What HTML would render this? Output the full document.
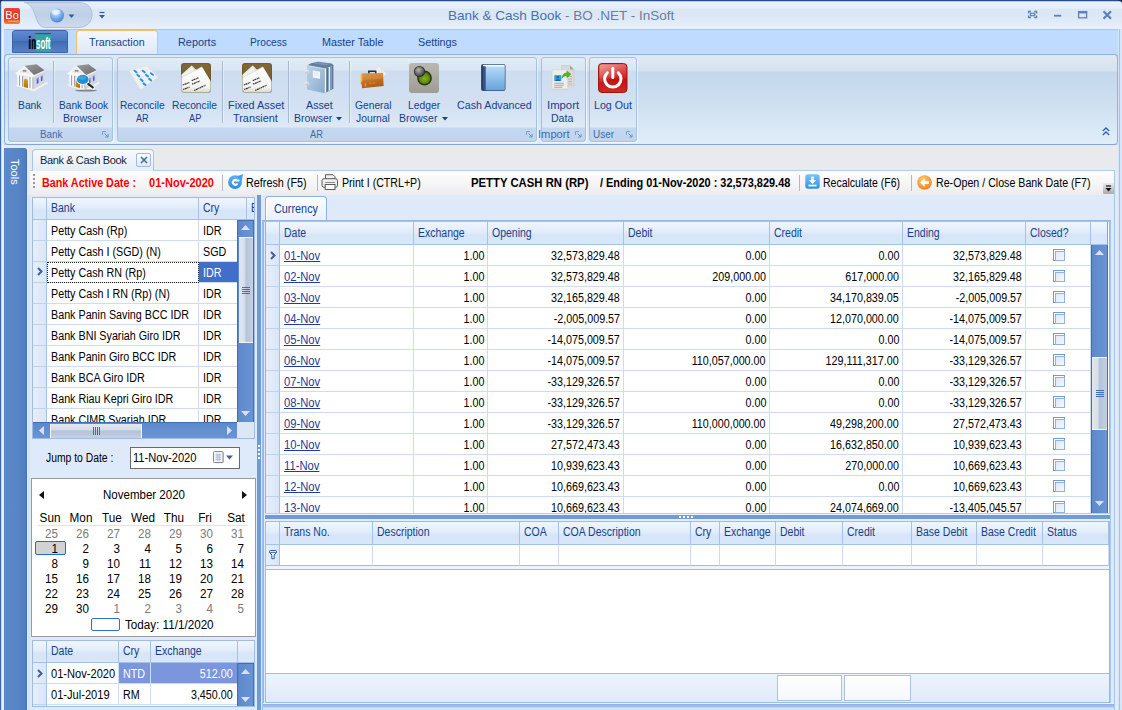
<!DOCTYPE html>
<html><head><meta charset="utf-8"><title>Bank &amp; Cash Book</title>
<style>

*{box-sizing:border-box;margin:0;padding:0}
html,body{width:1122px;height:710px;overflow:hidden;background:#bfdbff}
body{font-family:"Liberation Sans",sans-serif;font-size:11px;color:#000}
#app{position:absolute;left:0;top:0;width:1122px;height:710px;overflow:hidden;background:#bfdbff}
.abs{position:absolute}
.t{position:absolute;white-space:nowrap;line-height:14px}
/* title bar */
#titlebar{position:absolute;left:0;top:0;width:1122px;height:29px;background:linear-gradient(#eaf1fb 0,#e6eefa 8px,#dce7f6 9.500px,#dde8f6 17px,#e8f0fb 29px)}
#frameL{position:absolute;left:0;top:0;width:4px;height:710px;background:linear-gradient(90deg,#3a65ab 0,#3a65ab 1px,#bcd3f2 1.200px,#e6effb 2.500px,#e1ebfa 4px)}
#frameR{position:absolute;left:1118px;top:29px;width:4px;height:681px;background:linear-gradient(90deg,#d6e4f8 0,#d6e4f8 1px,#a4c3ee 1px,#a4c3ee 2px,#dbe8fa 2px,#d3e3f9 4px)}
#frameR2{display:none}
#frameT{position:absolute;left:0;top:0;width:1122px;height:2px;background:linear-gradient(#2a4c88 0,#2a4c88 1px,#9fbfe9 1px,#c5d9f3 2px)}
#title{left:448px;top:7px;font-size:13.5px;line-height:18px;color:#3e6aaa}
#tabrow{position:absolute;left:4px;top:29px;width:1114px;height:25px;background:#bfdbff;border-top:1px solid #a6c6ee}
.rtab{position:absolute;top:35px;font-size:11.6px;line-height:14px;color:#15428b;white-space:nowrap;letter-spacing:-.1px}
#tabsel{position:absolute;left:76px;top:30px;width:82px;height:25px;border:1px solid #f0c36b;border-bottom:none;border-radius:4px 4px 0 0;background:linear-gradient(#f4f8fd,#e6eef9 60%,#dde8f6)}
#insoft{position:absolute;left:12px;top:30px;width:56px;height:23px;border-radius:3px 3px 0 0;background:linear-gradient(#5f8bcf 0,#4a78bf 45%,#3f6cb3 50%,#5582c6 100%);border:1px solid #3c66a8}
/* ribbon */
#ribbon{position:absolute;left:4px;top:54px;width:1114px;height:91px;border:1px solid #8db2e3;border-bottom-color:#7ea6da;border-radius:4px;background:linear-gradient(#e3e9f3 0,#d5e1ef 16px,#c4d7ec 17px,#cfe0f1 50px,#dcebf7 80px,#dfeef9 100%)}
.rgroup{position:absolute;top:57px;height:85px;border:1px solid #a3c0e6;border-radius:3px;background:linear-gradient(#e3ecf7 0,#dae6f4 12px,#cddcef 13px,#d3e1f2 50px,#dfe9f6 69px,#c3d8ef 70px,#c1d6ee 100%);box-shadow:1px 1px 0 rgba(255,255,255,.6)}
.rcap{position:absolute;top:127px;font-size:11px;line-height:14px;color:#3e6aaa;white-space:nowrap;text-align:center;letter-spacing:-.25px}
.rlbl{position:absolute;font-size:11px;line-height:13px;color:#15428b;white-space:nowrap;text-align:center;letter-spacing:-.25px}
.rsep{position:absolute;top:61px;width:1px;height:62px;background:#a5b9d8;box-shadow:1px 0 0 rgba(255,255,255,.4)}
.launch{position:absolute;top:131px;width:7px;height:7px}

/* document area */
#docbg{position:absolute;left:4px;top:145px;width:1114px;height:565px;background:#e9eaee}
#tools{position:absolute;left:4px;top:148px;width:23px;height:562px;background:linear-gradient(90deg,#5c88c7,#5785c6 60%,#4f7dc0);border-radius:0 3px 0 0;border-right:1px solid #4672b4}
#toolsT{position:absolute;left:8px;top:159px;width:14px;height:40px;color:#fff;font-size:11px;writing-mode:vertical-rl;line-height:14px;letter-spacing:0}
#doctab{position:absolute;left:32px;top:149px;width:122px;height:22px;border:1px solid #a9c5ea;border-bottom:none;border-radius:4px 4px 0 0;background:linear-gradient(#f7fafe,#e3edfb)}
#doctabT{left:40px;top:153px;font-size:11px;letter-spacing:-.38px;color:#141d36}
#docx{position:absolute;left:136px;top:153px;width:15px;height:14px;border:1px solid #9dbbe3;border-radius:2px;background:linear-gradient(#fdfeff,#dde9f8)}
#toolbar{position:absolute;left:30px;top:170px;width:1085px;height:25px;border-right:1px solid #a9c6ec;background:linear-gradient(#fdfdfd 0,#f6f6f7 50%,#ececee 100%);border-top:1px solid #b5cdeb}
.tb{position:absolute;top:176px;white-space:nowrap;font-size:11px;line-height:14px;color:#000}
.tbsep{position:absolute;top:175px;width:1px;height:16px;background:#b8b8b8}
#main{position:absolute;left:28px;top:195px;width:1087px;height:515px;background:#deeafa;border-right:1px solid #a9c6ec}
/* grids */
.grid{position:absolute;overflow:hidden;background:#fff}
.gh{position:absolute;background:linear-gradient(#eef5fe 0,#e2edfb 45%,#d7e5f9 60%,#d9e7fa 100%);border-right:1px solid #a4c1e8;border-bottom:1px solid #a4c1e8;border-top:1px solid #a4c1e8;color:#15428b;font-size:11px;white-space:nowrap;overflow:hidden}
.gh span{position:absolute;left:4px;top:3px;line-height:14px;font-size:12px;transform:scaleX(.875);transform-origin:0 50%}
.gc{position:absolute;border-right:1px solid #cddcf0;border-bottom:1px solid #cddcf0;font-size:11px;white-space:nowrap;overflow:hidden;background:#fff}
.gc span{position:absolute;top:4px;line-height:14px;font-size:12px;transform:scaleX(.895);transform-origin:0 50%}
.gc span.r{transform-origin:100% 50%}
.gi{position:absolute;background:linear-gradient(90deg,#e6effb,#d9e6f8);border-right:1px solid #a4c1e8;border-bottom:1px solid #bcd2ee}
.lnk{color:#223a9a;text-decoration:underline}
.sbv{position:absolute;background:linear-gradient(90deg,#5d89cc,#6a94d3);border-left:1px solid #406db5;border-right:1px solid #406db5}
.sbh{position:absolute;background:linear-gradient(#5d89cc,#6a94d3);border-top:1px solid #406db5;border-bottom:1px solid #406db5}
.thumbv{position:absolute;background:linear-gradient(90deg,#e2e7ef 0,#d6deea 40%,#b4c3d9 50%,#c6d1e1 100%);border-top:1px solid #f2f5fa;border-bottom:1px solid #f2f5fa}
.thumbh{position:absolute;background:linear-gradient(#e2e7ef 0,#d6deea 40%,#b4c3d9 50%,#c6d1e1 100%);border-left:1px solid #f2f5fa;border-right:1px solid #f2f5fa}
.chk{position:absolute;width:12px;height:12px;border:1px solid #6f9bdc;background:#fff}
.chk:after{content:"";position:absolute;left:1px;top:1px;width:8px;height:8px;border:1px solid #8fb2e6;background:linear-gradient(135deg,#dfe8f7,#f4f8fe)}
/* calendar */
#cal{position:absolute;left:31px;top:478px;width:225px;height:159px;background:#fff;border:1px solid #9b9b9b}
.cd{position:absolute;width:30px;text-align:right;font-size:12.5px;line-height:14px;transform:scaleX(.93);transform-origin:100% 50%}
.cw{position:absolute;width:40px;text-align:center;font-size:12.5px;line-height:14px;transform:scaleX(.94);transform-origin:50% 50%}

</style></head>
<body>
<div id="app">
<div id="titlebar"></div>
<div id="tabrow"></div>
<svg class="abs" style="left:0;top:0" width="130" height="30" viewBox="0 0 130 30">
<defs><linearGradient id="qg" x1="0" y1="0" x2="0" y2="1"><stop offset="0" stop-color="#cbd8ec"/><stop offset=".5" stop-color="#bfcfe7"/><stop offset="1" stop-color="#cfdbee"/></linearGradient>
<radialGradient id="orb" cx=".4" cy=".3" r=".8"><stop offset="0" stop-color="#e8f3ff"/><stop offset=".45" stop-color="#7fb2ee"/><stop offset="1" stop-color="#3b78d0"/></radialGradient></defs>
<path d="M24 2.5 H78 C88 2.5 92 8 92 14.5 C92 21 88 27.500 78 27.500 H46 C38 27.500 37 20 34 12 C31 5 28 2.500 24 2.500Z" fill="url(#qg)" stroke="#adc0de" stroke-width="1"/>
<circle cx="57" cy="15.500" r="7" fill="url(#orb)"/>
<ellipse cx="56" cy="12" rx="4.500" ry="2.800" fill="#fff" opacity=".55"/>
<path d="M68.500 14.500h6l-3 3.500z" fill="#2a5db0"/>
<path d="M99.500 12.500h5" stroke="#2a5db0" stroke-width="1.200"/><path d="M99 15h6l-3 3.500z" fill="#2a5db0"/>
</svg>
<svg class="abs" style="left:4px;top:8px" width="16" height="16" viewBox="0 0 16 16">
<defs><linearGradient id="bog" x1="0" y1="0" x2="0" y2="1"><stop offset="0" stop-color="#e8463a"/><stop offset=".6" stop-color="#e1321f"/><stop offset="1" stop-color="#f28a1c"/></linearGradient></defs>
<rect x="0" y="0" width="16" height="16" rx="2" fill="url(#bog)"/>
<text x="1.300" y="11" font-family="Liberation Sans" font-size="11.500" fill="#fff" textLength="13.500" lengthAdjust="spacingAndGlyphs">Bo</text>
<rect x="4" y="12.500" width="11" height="1.200" fill="#f7c9a0" opacity=".7"/>
</svg>
<div class="t" id="title"><span style="color:#4570b4">Bank &amp; Cash Book</span><span style="color:#6b7c9f"> - BO .NET - InSoft</span></div>
<svg class="abs" style="left:1020px;top:6px" width="100" height="18" viewBox="0 0 100 18">
<g fill="none" stroke="#5c80b8" stroke-width="1.300">
<path d="M8.600 7.500v-2h2.400M14.200 5.500h2.400v2M8.600 9.500v2h2.400M14.200 11.500h2.400v-2"/><rect x="10.500" y="7.300" width="4.200" height="2.400" stroke-width="1.200"/>
<path d="M34 9.700h7.200" stroke-width="1.800"/>
<rect x="58.600" y="5.600" width="8" height="6.200"/><path d="M58 6.400h9.200" stroke-width="2"/>
<path d="M83.500 5.300l7.500 7.400M91 5.300l-7.500 7.400" stroke-width="2.200"/>
</g></svg>
<div id="insoft"></div><svg class="abs" style="left:26px;top:31px" width="30" height="22" viewBox="0 0 30 22">
<rect x="9.500" y="2.500" width="15.500" height="18" fill="#38a3a3"/>
<path d="M9.500 2.700h15.500" stroke="#26384a" stroke-width=".8"/>
<rect x="2.800" y="5" width="1.900" height="1.900" fill="#10131a"/><rect x="2.800" y="8.300" width="1.900" height="9.700" fill="#10131a"/>
<path d="M6.500 18V8.300M6.500 10.800C6.800 8.200 9 8.200 9 10.800V18" fill="none" stroke="#10131a" stroke-width="1.700"/>
<text x="10" y="18" font-family="Liberation Sans" font-size="16" font-weight="bold" fill="#fff" textLength="14.500" lengthAdjust="spacingAndGlyphs">soft</text>
</svg>
<div id="tabsel"></div>
<div class="t" style="left:88.7px;top:35px;font-size:11px;font-weight:normal;transform:scaleX(0.9744);transform-origin:0 0;color:#15428b">Transaction</div>
<div class="t" style="left:178.4px;top:35px;font-size:11px;font-weight:normal;transform:scaleX(0.9888);transform-origin:0 0;color:#15428b">Reports</div>
<div class="t" style="left:250.4px;top:35px;font-size:11px;font-weight:normal;transform:scaleX(0.9283);transform-origin:0 0;color:#15428b">Process</div>
<div class="t" style="left:321.7px;top:35px;font-size:11px;font-weight:normal;transform:scaleX(0.9796);transform-origin:0 0;color:#15428b">Master Table</div>
<div class="t" style="left:417.6px;top:35px;font-size:11px;font-weight:normal;transform:scaleX(0.9811);transform-origin:0 0;color:#15428b">Settings</div>
<div id="ribbon"></div>
<div class="rgroup" style="left:8px;width:105px"></div>
<div class="rgroup" style="left:117px;width:420px"></div>
<div class="rgroup" style="left:541px;width:45px"></div>
<div class="rgroup" style="left:589px;width:48px"></div>
<div class="rsep" style="left:53px"></div>
<div class="rsep" style="left:222px"></div>
<div class="rsep" style="left:288px"></div>
<div class="rsep" style="left:349px"></div>
<svg class="launch" style="left:102px" viewBox="0 0 7 7"><path d="M0.5 4V0.5H4" fill="none" stroke="#7b9fd0" stroke-width="1"/><path d="M2.5 2.5L6 6M6 3.2V6H3.2" fill="none" stroke="#6b8fc4" stroke-width="1"/></svg>
<svg class="launch" style="left:526px" viewBox="0 0 7 7"><path d="M0.5 4V0.5H4" fill="none" stroke="#7b9fd0" stroke-width="1"/><path d="M2.5 2.5L6 6M6 3.2V6H3.2" fill="none" stroke="#6b8fc4" stroke-width="1"/></svg>
<svg class="launch" style="left:575px" viewBox="0 0 7 7"><path d="M0.5 4V0.5H4" fill="none" stroke="#7b9fd0" stroke-width="1"/><path d="M2.5 2.5L6 6M6 3.2V6H3.2" fill="none" stroke="#6b8fc4" stroke-width="1"/></svg>
<svg class="launch" style="left:626px" viewBox="0 0 7 7"><path d="M0.5 4V0.5H4" fill="none" stroke="#7b9fd0" stroke-width="1"/><path d="M2.5 2.5L6 6M6 3.2V6H3.2" fill="none" stroke="#6b8fc4" stroke-width="1"/></svg>
<div class="t" style="left:18.3px;top:99px;font-size:11px;font-weight:normal;transform:scaleX(0.9371);transform-origin:0 0;color:#15428b;line-height:13px">Bank</div>
<div class="t" style="left:58.5px;top:99px;font-size:11px;font-weight:normal;transform:scaleX(0.9248);transform-origin:0 0;color:#15428b;line-height:13px">Bank Book</div>
<div class="t" style="left:120.3px;top:99px;font-size:11px;font-weight:normal;transform:scaleX(0.9232);transform-origin:0 0;color:#15428b;line-height:13px">Reconcile</div>
<div class="t" style="left:172.4px;top:99px;font-size:11px;font-weight:normal;transform:scaleX(0.9294);transform-origin:0 0;color:#15428b;line-height:13px">Reconcile</div>
<div class="t" style="left:227.6px;top:99px;font-size:11px;font-weight:normal;transform:scaleX(0.9884);transform-origin:0 0;color:#15428b;line-height:13px">Fixed Asset</div>
<div class="t" style="left:306px;top:99px;font-size:11px;font-weight:normal;transform:scaleX(0.9740);transform-origin:0 0;color:#15428b;line-height:13px">Asset</div>
<div class="t" style="left:354.7px;top:99px;font-size:11px;font-weight:normal;transform:scaleX(0.9325);transform-origin:0 0;color:#15428b;line-height:13px">General</div>
<div class="t" style="left:407.6px;top:99px;font-size:11px;font-weight:normal;transform:scaleX(0.9368);transform-origin:0 0;color:#15428b;line-height:13px">Ledger</div>
<div class="t" style="left:456.6px;top:99px;font-size:11px;font-weight:normal;transform:scaleX(0.9693);transform-origin:0 0;color:#15428b;line-height:13px">Cash Advanced</div>
<div class="t" style="left:546.6px;top:99px;font-size:11px;font-weight:normal;transform:scaleX(1.0293);transform-origin:0 0;color:#15428b;line-height:13px">Import</div>
<div class="t" style="left:593.7px;top:99px;font-size:11px;font-weight:normal;transform:scaleX(0.9683);transform-origin:0 0;color:#15428b;line-height:13px">Log Out</div>
<div class="t" style="left:63.4px;top:112px;font-size:11px;font-weight:normal;transform:scaleX(0.9593);transform-origin:0 0;color:#15428b;line-height:13px">Browser</div>
<div class="t" style="left:136.2px;top:112px;font-size:11px;font-weight:normal;transform:scaleX(0.8311);transform-origin:0 0;color:#15428b;line-height:13px">AR</div>
<div class="t" style="left:189px;top:112px;font-size:11px;font-weight:normal;transform:scaleX(0.8374);transform-origin:0 0;color:#15428b;line-height:13px">AP</div>
<div class="t" style="left:233px;top:112px;font-size:11px;font-weight:normal;transform:scaleX(0.9878);transform-origin:0 0;color:#15428b;line-height:13px">Transient</div>
<div class="t" style="left:293.6px;top:112px;font-size:11px;font-weight:normal;transform:scaleX(0.9493);transform-origin:0 0;color:#15428b;line-height:13px">Browser</div>
<div class="t" style="left:356.3px;top:112px;font-size:11px;font-weight:normal;transform:scaleX(0.9396);transform-origin:0 0;color:#15428b;line-height:13px">Journal</div>
<div class="t" style="left:398.7px;top:112px;font-size:11px;font-weight:normal;transform:scaleX(0.9518);transform-origin:0 0;color:#15428b;line-height:13px">Browser</div>
<div class="t" style="left:550.5px;top:112px;font-size:11px;font-weight:normal;transform:scaleX(0.9591);transform-origin:0 0;color:#15428b;line-height:13px">Data</div>
<svg class="abs" style="left:336px;top:116.500px" width="6" height="4" viewBox="0 0 6 4"><path d="M0 0h6L3 3.500z" fill="#15428b"/></svg>
<svg class="abs" style="left:441.5px;top:116.500px" width="6" height="4" viewBox="0 0 6 4"><path d="M0 0h6L3 3.500z" fill="#15428b"/></svg>
<div class="t" style="left:39.9px;top:127px;font-size:11px;font-weight:normal;transform:scaleX(0.8972);transform-origin:0 0;color:#3e6aaa">Bank</div>
<div class="t" style="left:310.1px;top:127px;font-size:11px;font-weight:normal;transform:scaleX(0.8442);transform-origin:0 0;color:#3e6aaa">AR</div>
<div class="t" style="left:538px;top:127px;font-size:11px;font-weight:normal;transform:scaleX(1.0132);transform-origin:0 0;color:#3e6aaa">Import</div>
<div class="t" style="left:592.8px;top:127px;font-size:11px;font-weight:normal;transform:scaleX(0.9038);transform-origin:0 0;color:#3e6aaa">User</div>
<svg class="abs" style="left:15px;top:62px" width="33" height="31" viewBox="0 0 33 31"><defs><linearGradient id="b1r" x1="0" y1="0" x2="1" y2="1"><stop offset="0" stop-color="#9c9c9c"/><stop offset="1" stop-color="#6a6a6a"/></linearGradient>
<linearGradient id="b1d" x1="0" y1="0" x2="0" y2="1"><stop offset="0" stop-color="#dba01c"/><stop offset="1" stop-color="#b37208"/></linearGradient></defs>
<path d="M.6 24.300L19.200 29.600 32.600 21.600 32 19.800 19.200 27 1.600 22.600z" fill="#f3f3f1"/>
<path d="M.6 24.300L19.200 29.600 32.600 21.600" fill="none" stroke="#dcdcda" stroke-width=".6"/>
<path d="M2.200 11.300L18.600 13.500V27.200L2.200 23z" fill="#e6e8ec"/>
<path d="M18.600 13.500L29.300 8.400 29.700 20.800 18.600 27.200z" fill="#d3d6dd"/>
<g fill="#98a3b8"><rect x="3.900" y="13.500" width="1.100" height="10"/><rect x="7" y="14" width="1.100" height="10.500"/><rect x="14.300" y="15" width="1.100" height="11"/><rect x="17.300" y="15.500" width="1.100" height="11.200"/></g>
<g fill="#fff"><rect x="2.600" y="13" width="1.300" height="10.300"/><rect x="5.700" y="13.500" width="1.300" height="10.800"/><rect x="13" y="14.800" width="1.300" height="11.200"/><rect x="16" y="15.200" width="1.300" height="11.400"/></g>
<path d="M8.800 24.900V19C8.800 15.600 13 16 13 19.300V26z" fill="url(#b1d)"/>
<path d="M21.700 16.900L23.500 16V21L21.700 22z" fill="#4463c6"/><path d="M25.900 14.500L27.500 13.700V18.500L25.900 19.300z" fill="#4463c6"/>
<path d="M21.500 16.400L23.800 15.300V17L21.500 18.100z" fill="#7f9be6" opacity=".7"/><path d="M25.700 14L27.800 13V14.600L25.700 15.600z" fill="#7f9be6" opacity=".7"/>
<path d="M9.600 3.700L.8 10.700 1.200 12 18.800 14.200 19.200 12.800z" fill="#f6f6f6"/>
<path d="M9.600 5.800L4 10.300 15.800 11.800z" fill="#e4e6ea"/>
<path d="M7.800 8.900h3.600" stroke="#555" stroke-width="1"/>
<path d="M9.600 3.700L21.600 2.300 29.500 8.200 19 13.100z" fill="url(#b1r)"/>
<path d="M.8 10.700L1.200 12 18.800 14.200 29.600 9" fill="none" stroke="#fff" stroke-width=".7"/>
</svg>
<svg class="abs" style="left:67px;top:62px" width="33" height="31" viewBox="0 0 33 31"><defs><linearGradient id="b2r" x1="0" y1="0" x2="1" y2="1"><stop offset="0" stop-color="#9c9c9c"/><stop offset="1" stop-color="#6a6a6a"/></linearGradient>
<linearGradient id="b2d" x1="0" y1="0" x2="0" y2="1"><stop offset="0" stop-color="#dba01c"/><stop offset="1" stop-color="#b37208"/></linearGradient></defs>
<path d="M.6 24.300L19.200 29.600 32.600 21.600 32 19.800 19.200 27 1.600 22.600z" fill="#f3f3f1"/>
<path d="M.6 24.300L19.200 29.600 32.600 21.600" fill="none" stroke="#dcdcda" stroke-width=".6"/>
<path d="M2.200 11.300L18.600 13.500V27.200L2.200 23z" fill="#e6e8ec"/>
<path d="M18.600 13.500L29.300 8.400 29.700 20.800 18.600 27.200z" fill="#d3d6dd"/>
<g fill="#98a3b8"><rect x="3.900" y="13.500" width="1.100" height="10"/><rect x="7" y="14" width="1.100" height="10.500"/><rect x="14.300" y="15" width="1.100" height="11"/><rect x="17.300" y="15.500" width="1.100" height="11.200"/></g>
<g fill="#fff"><rect x="2.600" y="13" width="1.300" height="10.300"/><rect x="5.700" y="13.500" width="1.300" height="10.800"/><rect x="13" y="14.800" width="1.300" height="11.200"/><rect x="16" y="15.200" width="1.300" height="11.400"/></g>
<path d="M8.800 24.900V19C8.800 15.600 13 16 13 19.300V26z" fill="url(#b2d)"/>
<path d="M21.700 16.900L23.500 16V21L21.700 22z" fill="#4463c6"/><path d="M25.900 14.500L27.500 13.700V18.500L25.900 19.300z" fill="#4463c6"/>
<path d="M21.500 16.400L23.800 15.300V17L21.500 18.100z" fill="#7f9be6" opacity=".7"/><path d="M25.700 14L27.800 13V14.600L25.700 15.600z" fill="#7f9be6" opacity=".7"/>
<path d="M9.600 3.700L.8 10.700 1.200 12 18.800 14.200 19.200 12.800z" fill="#f6f6f6"/>
<path d="M9.600 5.800L4 10.300 15.800 11.800z" fill="#e4e6ea"/>
<path d="M7.800 8.900h3.600" stroke="#555" stroke-width="1"/>
<path d="M9.600 3.700L21.600 2.300 29.500 8.200 19 13.100z" fill="url(#b2r)"/>
<path d="M.8 10.700L1.200 12 18.800 14.200 29.600 9" fill="none" stroke="#fff" stroke-width=".7"/>
<ellipse cx="19" cy="28.600" rx="11" ry="1" fill="#333" opacity=".55"/>
<path d="M20.600 21.600L26 25.600" stroke="#fff" stroke-width="3.600" stroke-linecap="round" opacity=".9"/>
<path d="M21.200 22L25.800 25.400" stroke="#2c2c2c" stroke-width="2.200" stroke-linecap="round"/>
<ellipse cx="15.800" cy="17.400" rx="6.600" ry="5.300" fill="#fff"/>
<ellipse cx="15.800" cy="17.400" rx="5.900" ry="4.600" fill="#1f8fdd"/>
<ellipse cx="15" cy="15.800" rx="4" ry="2.200" fill="#4fb0ee" opacity=".6"/></svg>
<svg class="abs" style="left:127px;top:63px" width="32" height="28" viewBox="0 0 32 28"><path d="M2.300 7.700L20 2.800 30.600 14.300 13.400 26.600z" fill="#f1f1ee"/>
<path d="M2.300 7.700L20 2.800 30.600 14.300 13.400 26.600z" fill="none" stroke="#e2e4e6" stroke-width=".7"/>
<g stroke="#e3e6ea" stroke-width=".8"><path d="M7 6.400L19.500 22.200M12.500 4.900L25 18.300M5.500 11.500L24 5.500M9 16.500L27.500 9.500M11.500 21.500L29.500 13"/></g>
<g stroke="#1b9af0" stroke-width="2" stroke-linecap="round"><path d="M7.5 7.7L9.5 9.3"/><path d="M15.7 7.7L17.7 9.3"/><path d="M23.9 10.2L25.9 11.8"/><path d="M10.3 11.8L12.3 13.4"/><path d="M19.0 11.8L21.0 13.4"/><path d="M22.2 15.9L24.2 17.5"/><path d="M13.6 16.3L15.6 17.9"/><path d="M16.5 20.4L18.5 22.0"/></g></svg>
<svg class="abs" style="left:180.5px;top:63px" width="30" height="30" viewBox="0 0 30 30"><defs><linearGradient id="n1g" x1="0" y1="0" x2="0" y2="1"><stop offset="0" stop-color="#806737"/><stop offset="1" stop-color="#6b562f"/></linearGradient>
<linearGradient id="n1p" x1="0" y1="0" x2="0" y2="1"><stop offset="0" stop-color="#ffffff"/><stop offset=".75" stop-color="#f4f4f2"/><stop offset="1" stop-color="#cfcfcc"/></linearGradient>
<clipPath id="n1c"><rect x="0" y="0" width="30" height="30" rx="3.200"/></clipPath></defs>
<rect x="0" y="0" width="30" height="30" rx="3.200" fill="url(#n1g)"/>
<g clip-path="url(#n1c)">
<path d="M10.700 2.600L-1 13V31H18L16 8z" fill="#efefed"/>
<path d="M10.700 2.600L16.500 8.200 14.500 9.200z" fill="#d9d9d6"/>
<path d="M21 3.800L-1 15.500V31H31V20.500z" fill="url(#n1p)"/>
<path d="M21 3.800L-1 15.500" stroke="#d2d2cf" stroke-width=".6"/>
<g stroke="#3a3a3a" stroke-width="1.300" fill="none" stroke-dasharray="1.400 .5 2.200 .5 .9 .5">
<path d="M1.700 22L8.300 19.500M10.700 17.600L17.400 14.800"/>
<path d="M2 26.500L8.600 24M11 21.200L19 18"/>
<path d="M13.200 27.500L24.600 22.200"/></g>
</g>
<rect x=".4" y=".4" width="29.200" height="29.200" rx="3" fill="none" stroke="#5d4a27" stroke-width=".6" opacity=".6"/></svg>
<svg class="abs" style="left:241.5px;top:63px" width="30" height="30" viewBox="0 0 30 30"><defs><linearGradient id="n2g" x1="0" y1="0" x2="0" y2="1"><stop offset="0" stop-color="#806737"/><stop offset="1" stop-color="#6b562f"/></linearGradient>
<linearGradient id="n2p" x1="0" y1="0" x2="0" y2="1"><stop offset="0" stop-color="#ffffff"/><stop offset=".75" stop-color="#f4f4f2"/><stop offset="1" stop-color="#cfcfcc"/></linearGradient>
<clipPath id="n2c"><rect x="0" y="0" width="30" height="30" rx="3.200"/></clipPath></defs>
<rect x="0" y="0" width="30" height="30" rx="3.200" fill="url(#n2g)"/>
<g clip-path="url(#n2c)">
<path d="M10.700 2.600L-1 13V31H18L16 8z" fill="#efefed"/>
<path d="M10.700 2.600L16.500 8.200 14.500 9.200z" fill="#d9d9d6"/>
<path d="M21 3.800L-1 15.500V31H31V20.500z" fill="url(#n2p)"/>
<path d="M21 3.800L-1 15.500" stroke="#d2d2cf" stroke-width=".6"/>
<g stroke="#3a3a3a" stroke-width="1.300" fill="none" stroke-dasharray="1.400 .5 2.200 .5 .9 .5">
<path d="M1.700 22L8.300 19.500M10.700 17.600L17.400 14.800"/>
<path d="M2 26.500L8.600 24M11 21.200L19 18"/>
<path d="M13.200 27.500L24.600 22.200"/></g>
</g>
<rect x=".4" y=".4" width="29.200" height="29.200" rx="3" fill="none" stroke="#5d4a27" stroke-width=".6" opacity=".6"/></svg>
<svg class="abs" style="left:304px;top:61px" width="32" height="33" viewBox="0 0 32 33"><defs><linearGradient id="bg1" x1="0" y1="0" x2="1" y2="1"><stop offset="0" stop-color="#bcd4e7"/><stop offset=".5" stop-color="#a3c1db"/><stop offset="1" stop-color="#86aacb"/></linearGradient></defs>
<path d="M7 2.200L14 .8 27.500 2.600 30 4.400 20.600 7.700 3 4.400z" fill="#647f9b"/>
<path d="M9 2.400L14.500 1.400 26 3 22 4.600z" fill="#8ea4ba" opacity=".6"/>
<path d="M20.600 7.700L30 4.400V27.200L20.600 32.200z" fill="#54718f"/>
<path d="M20.600 7.700L22.200 7.100V31.300L20.600 32.200z" fill="#f2f5f8"/>
<path d="M24.600 6.300L26.100 5.800V29.300L24.600 30z" fill="#e8eef4"/>
<path d="M26.100 5.800L28.200 5.100V28.200L26.100 29.300z" fill="#7c9dbd"/>
<path d="M29.300 4.700L30 4.400V27.200L29.300 27.600z" fill="#c9d7e4"/>
<path d="M3 4.400L20.600 7.700V32.200L3 28.600z" fill="url(#bg1)"/>
<path d="M3 4.400L20.600 7.700" stroke="#d7e5f0" stroke-width=".8"/>
<path d="M8.800 9.400L16 10.700V17.800L8.800 16.600z" fill="#f4f7fa"/>
<path d="M9.600 11.500l5.600 1M9.600 13.500l5.600 1" stroke="#d4dde6" stroke-width=".6"/>
<g fill="none" stroke="#e9e3e6" stroke-width="1.200"><ellipse cx="2.600" cy="10.500" rx="1.700" ry="1.300"/><ellipse cx="2.600" cy="22.500" rx="1.700" ry="1.300"/></g>
<g fill="none" stroke="#b7a9ad" stroke-width=".5"><path d="M1 11.700h3.200M1 23.700h3.200"/></g></svg>
<svg class="abs" style="left:358px;top:64px" width="32" height="28" viewBox="0 0 32 28"><defs><linearGradient id="brg" x1="0" y1="0" x2=".3" y2="1"><stop offset="0" stop-color="#d88b3e"/><stop offset=".5" stop-color="#c87528"/><stop offset="1" stop-color="#ad5c17"/></linearGradient></defs>
<path d="M20.700 2.200L28.600 9.600 24.500 14 16.500 6.500z" fill="#f1efea" stroke="#dcdad4" stroke-width=".4"/>
<path d="M22 5.500l3.500 3.300M20.500 7l3.500 3.300" stroke="#d0cdc6" stroke-width=".6"/>
<path d="M10.800 9.800V7.300H17.700V9.800" fill="none" stroke="#2b2b2b" stroke-width="1.500"/>
<path d="M3.500 9.600L25 9 25.600 22 4 24.200z" fill="url(#brg)"/>
<path d="M3.500 9.600L25 9 25.200 14.500 3.700 16z" fill="#e3a35c" opacity=".35"/>
<path d="M2.600 10.400L4.300 10.300V17.600L2.600 17.700z" fill="#f7c61a"/>
<path d="M2.800 17.700L4.300 17.600V20.500L2.800 20.600z" fill="#e8791a"/>
<path d="M6.800 19.200h1.400v3.400H6.800z" fill="#e2a463" opacity=".8"/>
<path d="M11 19.200h2.500M15 19h2" stroke="#dd9a58" stroke-width="1" opacity=".8"/></svg>
<svg class="abs" style="left:409px;top:63px" width="30" height="30" viewBox="0 0 30 30"><defs><linearGradient id="lg" x1="0" y1="0" x2="0" y2="1"><stop offset="0" stop-color="#b9b9b2"/><stop offset="1" stop-color="#9d9d96"/></linearGradient>
<radialGradient id="lgn" cx=".5" cy=".55" r=".6"><stop offset="0" stop-color="#86b420"/><stop offset=".65" stop-color="#5f8a12"/><stop offset="1" stop-color="#34500a"/></radialGradient>
<radialGradient id="lgk" cx=".4" cy=".35" r=".7"><stop offset="0" stop-color="#b5b5b5"/><stop offset="1" stop-color="#3a3a3a"/></radialGradient></defs>
<rect x="0" y="0" width="30" height="30" rx="3" fill="url(#lg)"/>
<circle cx="15.500" cy="15" r="7.400" fill="#2a3610"/>
<circle cx="15.500" cy="15" r="6" fill="url(#lgn)"/>
<circle cx="10.500" cy="8.500" r="5.600" fill="#2a2a2a"/>
<circle cx="10.500" cy="8.500" r="4.800" fill="url(#lgk)"/></svg>
<svg class="abs" style="left:480px;top:63px" width="27" height="29" viewBox="0 0 27 29"><defs><linearGradient id="bkg" x1="0" y1="0" x2="0" y2="1"><stop offset="0" stop-color="#bcdcf4"/><stop offset=".5" stop-color="#8fc0ea"/><stop offset="1" stop-color="#6aa3da"/></linearGradient></defs>
<rect x="1" y="1" width="24.500" height="27" rx="2.200" fill="#34507f"/>
<rect x="5.500" y="2.200" width="19.300" height="25" rx="1" fill="url(#bkg)"/>
<rect x="3" y="1.800" width="21.500" height="1.700" rx=".8" fill="#f4f9fd"/>
<rect x="2" y="3.500" width="3.500" height="23.500" fill="#3d5684"/>
<rect x="2" y="3.500" width="1.200" height="23.500" fill="#2a3c63"/></svg>
<svg class="abs" style="left:548px;top:63px" width="30" height="30" viewBox="0 0 30 30"><path d="M13.700 2.500h8.300l4 4v16.800H13.700z" fill="#d9d9d5" stroke="#c4c4bf" stroke-width=".5"/><path d="M22 2.500v4h4z" fill="#a9a9a4"/>
<g stroke="#b5b5b0" stroke-width=".9"><path d="M19.500 13.500h4.500M19.500 16h4.500M19.500 18.500h4.500M19.500 21h4.500"/></g>
<path d="M4.100 6.800h15.500V27H4.100z" fill="#ededea" stroke="#d2d2cd" stroke-width=".5"/>
<path d="M4.100 25.500h15.500V27H4.100z" fill="#d6d6d2"/>
<rect x="6.300" y="12.100" width="7" height="6" fill="#2e9fe0"/>
<circle cx="9.800" cy="14.300" r="1.300" fill="#176aa8"/><path d="M7.400 18.100c.3-2.500 4.500-2.500 4.800 0z" fill="#176aa8"/>
<g stroke="#a8a8a3" stroke-width="1"><path d="M6.300 20.300h9.500M6.300 22.300h9.500M6.300 24.300h8"/></g>
<path d="M13.800 15.500c.3-3.600 2.300-5.600 5-5.700V7.900l4.200 3.400-4.200 3.500v-2c-2 0-3.400.7-5 2.700z" fill="#52b32f" stroke="#3f9424" stroke-width=".4"/></svg>
<svg class="abs" style="left:598px;top:63px" width="30" height="30" viewBox="0 0 30 30"><defs><linearGradient id="log" x1="0" y1="0" x2="0" y2="1"><stop offset="0" stop-color="#e25550"/><stop offset=".45" stop-color="#d02a28"/><stop offset=".55" stop-color="#c11210"/><stop offset="1" stop-color="#d42a22"/></linearGradient>
<linearGradient id="lgl" x1="0" y1="0" x2="1" y2="1"><stop offset="0" stop-color="#fff" stop-opacity=".45"/><stop offset=".6" stop-color="#fff" stop-opacity=".05"/><stop offset="1" stop-color="#fff" stop-opacity="0"/></linearGradient></defs>
<rect x=".5" y=".5" width="28.500" height="29" rx="3.500" fill="url(#log)" stroke="#a01512" stroke-width="1"/>
<path d="M1.500 4a2.500 2.500 0 0 1 2.500-2.500h21.500a2.500 2.500 0 0 1 2.500 2.500v6C20 12 10 15 1.500 20z" fill="url(#lgl)"/>
<path d="M9.300 9.800a8.200 8.200 0 1 0 11 0" fill="none" stroke="#fff" stroke-width="3" stroke-linecap="round"/>
<path d="M14.800 5.200v9.300" stroke="#fff" stroke-width="3" stroke-linecap="round"/></svg>
<svg class="abs" style="left:1101.6px;top:126.6px" width="8" height="9" viewBox="0 0 8 9"><path d="M.8 4L4 1L7.2 4M.8 8L4 5L7.2 8" fill="none" stroke="#2f62b8" stroke-width="1.3"/></svg>
<div id="frameL"></div><div id="frameR"></div><div id="frameR2"></div><div id="frameT"></div><svg class="abs" style="left:0;top:0" width="4" height="4" viewBox="0 0 4 4"><path d="M0 0H4C1.500 .6 .6 1.500 0 4z" fill="#1e2f4f"/></svg><svg class="abs" style="left:1118px;top:0" width="4" height="4" viewBox="0 0 4 4"><path d="M0 0H4V4C4 2 2.500 0.800 0 0.800z" fill="#1e2f4f"/></svg>
<div id="docbg"></div><div id="tools"></div><div id="toolsT">Tools</div>
<div id="toolbar"></div><div id="main"></div>
<div id="doctab"></div><div class="t" id="doctabT">Bank &amp; Cash Book</div><div id="docx"></div>
<svg class="abs" style="left:140px;top:156px" width="8" height="8" viewBox="0 0 8 8"><path d="M1 1L7 7M7 1L1 7" stroke="#3a66b0" stroke-width="1.500"/></svg>
<svg class="abs" style="left:33px;top:173px" width="3" height="18" viewBox="0 0 3 18"><g fill="#9a9a9a"><rect x="0" y="1" width="2" height="2"/><rect x="0" y="5" width="2" height="2"/><rect x="0" y="9" width="2" height="2"/><rect x="0" y="13" width="2" height="2"/></g></svg>
<div class="t" style="left:42.4px;top:176px;font-size:12px;font-weight:bold;transform:scaleX(0.8958);transform-origin:0 0;color:#ff0000">Bank Active Date :</div>
<div class="t" style="left:149px;top:176px;font-size:12px;font-weight:bold;transform:scaleX(0.9191);transform-origin:0 0;color:#ff0000">01-Nov-2020</div>
<div class="tbsep" style="left:222px"></div>
<svg class="abs" style="left:228px;top:174px" width="16" height="16" viewBox="0 0 16 16"><defs><linearGradient id="rfg" x1="0" y1="0" x2="0" y2="1"><stop offset="0" stop-color="#5cb4f6"/><stop offset="1" stop-color="#2a8be2"/></linearGradient></defs>
<circle cx="7" cy="8.200" r="6.900" fill="url(#rfg)"/>
<path d="M8.500 2.200L15 .3 13.600 7.300z" fill="#3fa2f1"/>
<path d="M10.600 6.500H8.800M8.900 6.600A2.400 2.400 0 1 0 8.900 10.200" fill="none" stroke="#fff" stroke-width="2.100" stroke-linecap="round"/></svg>
<div class="t" style="left:246.2px;top:176px;font-size:12px;font-weight:normal;transform:scaleX(0.9011);transform-origin:0 0;">Refresh (F5)</div>
<div class="tbsep" style="left:317px"></div>
<svg class="abs" style="left:321px;top:174px" width="18" height="17" viewBox="0 0 18 17"><path d="M4.500 5V.7H12l2 2V5" fill="#f1f1f1" stroke="#5a5a5a" stroke-width="1"/>
<rect x="1" y="4.700" width="15.500" height="8.600" rx="2" fill="#eeeeee" stroke="#5a5a5a" stroke-width="1"/>
<rect x="4.200" y="10.500" width="9.800" height="5" fill="#fff" stroke="#5a5a5a" stroke-width="1"/>
<path d="M4.200 8.500h9.800" stroke="#8a8a8a" stroke-width="1"/></svg>
<div class="t" style="left:341.5px;top:176px;font-size:12px;font-weight:normal;transform:scaleX(0.8841);transform-origin:0 0;">Print I (CTRL+P)</div>
<div class="t" style="left:471.2px;top:176px;font-size:12px;font-weight:bold;transform:scaleX(0.9433);transform-origin:0 0;">PETTY CASH RN (RP)</div>
<div class="t" style="left:600.2px;top:176px;font-size:12px;font-weight:bold;transform:scaleX(0.9115);transform-origin:0 0;">/ Ending 01-Nov-2020 : 32,573,829.48</div>
<div class="tbsep" style="left:799px"></div>
<svg class="abs" style="left:804.5px;top:174px" width="15" height="15" viewBox="0 0 15 15"><defs><linearGradient id="rcg" x1="0" y1="0" x2="0" y2="1"><stop offset="0" stop-color="#78c4f8"/><stop offset="1" stop-color="#2f90e4"/></linearGradient></defs>
<rect x=".3" y=".3" width="14.400" height="14.400" rx="2.600" fill="url(#rcg)"/>
<path d="M6.200 2.500h2.600v3.700h2.400l-3.700 3.800-3.700-3.800h2.400z" fill="#fff"/>
<rect x="3.400" y="10.700" width="8.200" height="1.700" fill="#fff"/></svg>
<div class="t" style="left:823.3px;top:176px;font-size:12px;font-weight:normal;transform:scaleX(0.8747);transform-origin:0 0;">Recalculate (F6)</div>
<div class="tbsep" style="left:911px"></div>
<svg class="abs" style="left:917px;top:174.5px" width="15" height="15" viewBox="0 0 15 15"><defs><radialGradient id="bkc" cx=".4" cy=".3" r=".8"><stop offset="0" stop-color="#ffc873"/><stop offset="1" stop-color="#f07c10"/></radialGradient></defs>
<circle cx="7.500" cy="7.500" r="7.300" fill="url(#bkc)"/>
<path d="M3 7.500l4.600-4.200v2.700h4.400v3h-4.400v2.700z" fill="#fff"/></svg>
<div class="t" style="left:935.6px;top:176px;font-size:12px;font-weight:normal;transform:scaleX(0.8881);transform-origin:0 0;">Re-Open / Close Bank Date (F7)</div>
<div class="abs" style="left:1103px;top:183px;width:11px;height:11px;background:linear-gradient(#ececec,#a9a9a9);border-radius:1px"></div>
<svg class="abs" style="left:1105px;top:185px" width="7" height="7" viewBox="0 0 7 7"><path d="M1 1h5" stroke="#111" stroke-width="1.200"/><path d="M0.500 3h6l-3 3.500z" fill="#111"/></svg>
<div class="abs" style="left:28px;top:195px;width:229px;height:515px;background:linear-gradient(90deg,#cfe0f6 0,#e1ebf9 3px,#deeafa 4px)"></div>
<div class="grid" style="left:32px;top:197px;width:223px;height:242px;border:1px solid #9fbce4">
<div class="gh" style="left:0;top:0;width:14px;height:22px;border-top:none"></div>
<div class="gh" style="left:14px;top:0;width:152px;height:22px;border-top:none"><span>Bank</span></div>
<div class="gh" style="left:166px;top:0;width:48px;height:22px;border-top:none"><span style="left:4px">Cry</span></div>
<div class="gh" style="left:214px;top:0;width:48px;height:22px;border-top:none"><span>Exchange</span></div>
<div class="gi" style="left:0;top:22px;width:14px;height:21px"></div>
<div class="gc" style="left:14px;top:22px;width:152px;height:21px"><span style="left:4px">Petty Cash (Rp)</span></div>
<div class="gc" style="left:166px;top:22px;width:48px;height:21px"><span style="left:4px">IDR</span></div>
<div class="gi" style="left:0;top:43px;width:14px;height:21px"></div>
<div class="gc" style="left:14px;top:43px;width:152px;height:21px"><span style="left:4px">Petty Cash I (SGD) (N)</span></div>
<div class="gc" style="left:166px;top:43px;width:48px;height:21px"><span style="left:4px">SGD</span></div>
<div class="gi" style="left:0;top:64px;width:14px;height:21px"></div>
<div class="gc" style="left:14px;top:64px;width:152px;height:21px;outline:1px dotted #222;outline-offset:-1px"><span style="left:4px">Petty Cash RN (Rp)</span></div>
<div class="gc" style="left:166px;top:64px;width:48px;height:21px;background:#3f6fc8;color:#fff"><span style="left:4px">IDR</span></div>
<div class="gi" style="left:0;top:85px;width:14px;height:21px"></div>
<div class="gc" style="left:14px;top:85px;width:152px;height:21px"><span style="left:4px">Petty Cash I RN (Rp) (N)</span></div>
<div class="gc" style="left:166px;top:85px;width:48px;height:21px"><span style="left:4px">IDR</span></div>
<div class="gi" style="left:0;top:106px;width:14px;height:21px"></div>
<div class="gc" style="left:14px;top:106px;width:152px;height:21px"><span style="left:4px">Bank Panin Saving BCC IDR</span></div>
<div class="gc" style="left:166px;top:106px;width:48px;height:21px"><span style="left:4px">IDR</span></div>
<div class="gi" style="left:0;top:127px;width:14px;height:21px"></div>
<div class="gc" style="left:14px;top:127px;width:152px;height:21px"><span style="left:4px">Bank BNI Syariah Giro IDR</span></div>
<div class="gc" style="left:166px;top:127px;width:48px;height:21px"><span style="left:4px">IDR</span></div>
<div class="gi" style="left:0;top:148px;width:14px;height:21px"></div>
<div class="gc" style="left:14px;top:148px;width:152px;height:21px"><span style="left:4px">Bank Panin Giro BCC IDR</span></div>
<div class="gc" style="left:166px;top:148px;width:48px;height:21px"><span style="left:4px">IDR</span></div>
<div class="gi" style="left:0;top:169px;width:14px;height:21px"></div>
<div class="gc" style="left:14px;top:169px;width:152px;height:21px"><span style="left:4px">Bank BCA Giro IDR</span></div>
<div class="gc" style="left:166px;top:169px;width:48px;height:21px"><span style="left:4px">IDR</span></div>
<div class="gi" style="left:0;top:190px;width:14px;height:21px"></div>
<div class="gc" style="left:14px;top:190px;width:152px;height:21px"><span style="left:4px">Bank Riau Kepri Giro IDR</span></div>
<div class="gc" style="left:166px;top:190px;width:48px;height:21px"><span style="left:4px">IDR</span></div>
<div class="gi" style="left:0;top:211px;width:14px;height:21px"></div>
<div class="gc" style="left:14px;top:211px;width:152px;height:21px"><span style="left:4px">Bank CIMB Syariah IDR</span></div>
<div class="gc" style="left:166px;top:211px;width:48px;height:21px"><span style="left:4px">IDR</span></div>
<svg class="abs" style="left:4px;top:69px" width="6" height="9" viewBox="0 0 6 9"><path d="M1 1L4.500 4.500L1 8" fill="none" stroke="#3e5f99" stroke-width="2"/></svg>
<div class="sbv" style="left:204px;top:22px;width:17px;height:203px;border-top:1px solid #406db5"></div>
<div class="thumbv" style="left:206px;top:39px;width:14px;height:106px"></div>
<svg class="abs" style="left:209px;top:89px" width="8" height="7" viewBox="0 0 8 7"><path d="M0 .5h8M0 2.500h8M0 4.500h8M0 6.500h8" stroke="#446db0" stroke-width="1"/></svg>
<svg class="abs" style="left:208px;top:27px" width="9" height="5" viewBox="0 0 9 5"><path d="M0 5L4.500 0L9 5z" fill="#d7e3f5"/></svg>
<svg class="abs" style="left:208px;top:213px" width="9" height="5" viewBox="0 0 9 5"><path d="M0 0L4.500 5L9 0z" fill="#d7e3f5"/></svg>
<div class="sbh" style="left:0;top:224px;width:204px;height:17px"></div>
<div class="abs" style="left:204px;top:224px;width:17px;height:17px;background:#dbe6f6"></div>
<div class="thumbh" style="left:17px;top:226px;width:92px;height:14px"></div>
<svg class="abs" style="left:60px;top:229px" width="7" height="8" viewBox="0 0 7 8"><path d="M.5 0v8M2.500 0v8M4.500 0v8M6.500 0v8" stroke="#446db0" stroke-width="1"/></svg>
<svg class="abs" style="left:6px;top:228px" width="5" height="9" viewBox="0 0 5 9"><path d="M5 0L0 4.500L5 9z" fill="#d7e3f5"/></svg>
<svg class="abs" style="left:194px;top:228px" width="5" height="9" viewBox="0 0 5 9"><path d="M0 0L5 4.500L0 9z" fill="#d7e3f5"/></svg>
</div>
<div class="abs" style="left:257px;top:195px;width:4px;height:515px;background:#6f9cd9"></div><div class="abs" style="left:261px;top:195px;width:4px;height:515px;background:#e0eafa"></div><div class="abs" style="left:262px;top:220px;width:2px;height:490px;background:linear-gradient(90deg,#a3c1ea,#8fb3e4)"></div>
<svg class="abs" style="left:258px;top:445px" width="2" height="14" viewBox="0 0 2 14"><g fill="#fff"><rect x="0" y="0" width="2" height="2"/><rect x="0" y="4" width="2" height="2"/><rect x="0" y="8" width="2" height="2"/><rect x="0" y="12" width="2" height="2"/></g></svg>
<div class="t" style="left:46.3px;top:451px;font-size:12px;font-weight:normal;transform:scaleX(0.8623);transform-origin:0 0;">Jump to Date :</div>
<div class="abs" style="left:130px;top:447px;width:110px;height:22px;border:1px solid #6b6b6b;background:#fff"></div>
<div class="t" style="left:133px;top:451px;font-size:12px;font-weight:normal;transform:scaleX(0.9272);transform-origin:0 0;">11-Nov-2020</div>
<svg class="abs" style="left:213px;top:451px" width="22" height="14" viewBox="0 0 22 14"><rect x="1.300" y="1.300" width="9.500" height="11" rx="1" fill="#c9c3bd"/><rect x=".5" y=".5" width="9.500" height="11" rx="1" fill="#f3f4f6" stroke="#8a8a8a" stroke-width="1"/><path d="M2.500 4h5.500M2.500 6.200h5.500M2.500 8.400h5.500M4.300 2.500v7.500M6.300 2.500v7.500" stroke="#a9bad6" stroke-width=".9"/><path d="M13 4.500h7l-3.500 4z" fill="#4a5f8a"/></svg>
<div id="cal"></div>
<div class="t" style="left:102.5px;top:488px;font-size:12.5px;font-weight:normal;transform:scaleX(0.9218);transform-origin:0 0;">November 2020</div>
<svg class="abs" style="left:39px;top:491px" width="5" height="8" viewBox="0 0 5 8"><path d="M5 0L0 4L5 8z" fill="#111"/></svg>
<svg class="abs" style="left:242px;top:491px" width="5" height="8" viewBox="0 0 5 8"><path d="M0 0L5 4L0 8z" fill="#111"/></svg>
<div class="cw" style="left:30px;top:511px">Sun</div>
<div class="cw" style="left:61px;top:511px">Mon</div>
<div class="cw" style="left:92px;top:511px">Tue</div>
<div class="cw" style="left:123px;top:511px">Wed</div>
<div class="cw" style="left:154px;top:511px">Thu</div>
<div class="cw" style="left:185px;top:511px">Fri</div>
<div class="cw" style="left:216px;top:511px">Sat</div>
<div class="abs" style="left:38px;top:525px;width:210px;height:1px;background:#e3e3e3"></div>
<div class="abs" style="left:35px;top:541px;width:31px;height:14px;border:1px solid #1a6fd6;border-radius:2px;background:#d2d2d2"></div>
<div class="cd" style="left:28px;top:527px;color:#7a7a7a">25</div>
<div class="cd" style="left:59px;top:527px;color:#7a7a7a">26</div>
<div class="cd" style="left:90px;top:527px;color:#7a7a7a">27</div>
<div class="cd" style="left:121px;top:527px;color:#7a7a7a">28</div>
<div class="cd" style="left:152px;top:527px;color:#7a7a7a">29</div>
<div class="cd" style="left:183px;top:527px;color:#7a7a7a">30</div>
<div class="cd" style="left:214px;top:527px;color:#7a7a7a">31</div>
<div class="cd" style="left:28px;top:542px;color:#000">1</div>
<div class="cd" style="left:59px;top:542px;color:#000">2</div>
<div class="cd" style="left:90px;top:542px;color:#000">3</div>
<div class="cd" style="left:121px;top:542px;color:#000">4</div>
<div class="cd" style="left:152px;top:542px;color:#000">5</div>
<div class="cd" style="left:183px;top:542px;color:#000">6</div>
<div class="cd" style="left:214px;top:542px;color:#000">7</div>
<div class="cd" style="left:28px;top:557px;color:#000">8</div>
<div class="cd" style="left:59px;top:557px;color:#000">9</div>
<div class="cd" style="left:90px;top:557px;color:#000">10</div>
<div class="cd" style="left:121px;top:557px;color:#000">11</div>
<div class="cd" style="left:152px;top:557px;color:#000">12</div>
<div class="cd" style="left:183px;top:557px;color:#000">13</div>
<div class="cd" style="left:214px;top:557px;color:#000">14</div>
<div class="cd" style="left:28px;top:572px;color:#000">15</div>
<div class="cd" style="left:59px;top:572px;color:#000">16</div>
<div class="cd" style="left:90px;top:572px;color:#000">17</div>
<div class="cd" style="left:121px;top:572px;color:#000">18</div>
<div class="cd" style="left:152px;top:572px;color:#000">19</div>
<div class="cd" style="left:183px;top:572px;color:#000">20</div>
<div class="cd" style="left:214px;top:572px;color:#000">21</div>
<div class="cd" style="left:28px;top:587px;color:#000">22</div>
<div class="cd" style="left:59px;top:587px;color:#000">23</div>
<div class="cd" style="left:90px;top:587px;color:#000">24</div>
<div class="cd" style="left:121px;top:587px;color:#000">25</div>
<div class="cd" style="left:152px;top:587px;color:#000">26</div>
<div class="cd" style="left:183px;top:587px;color:#000">27</div>
<div class="cd" style="left:214px;top:587px;color:#000">28</div>
<div class="cd" style="left:28px;top:602px;color:#000">29</div>
<div class="cd" style="left:59px;top:602px;color:#000">30</div>
<div class="cd" style="left:90px;top:602px;color:#7a7a7a">1</div>
<div class="cd" style="left:121px;top:602px;color:#7a7a7a">2</div>
<div class="cd" style="left:152px;top:602px;color:#7a7a7a">3</div>
<div class="cd" style="left:183px;top:602px;color:#7a7a7a">4</div>
<div class="cd" style="left:214px;top:602px;color:#7a7a7a">5</div>
<div class="abs" style="left:91px;top:618px;width:29px;height:13px;border:1px solid #2e75c8;border-radius:2px;background:#fff"></div>
<div class="t" style="left:125.4px;top:618px;font-size:12.5px;font-weight:normal;transform:scaleX(0.9328);transform-origin:0 0;">Today: 11/1/2020</div>
<div class="grid" style="left:32px;top:640px;width:223px;height:67px;border:1px solid #9fbce4">
<div class="gh" style="left:0;top:0;width:14px;height:22px;border-top:none"></div>
<div class="gh" style="left:14px;top:0;width:72px;height:22px;border-top:none"><span>Date</span></div>
<div class="gh" style="left:86px;top:0;width:32px;height:22px;border-top:none"><span>Cry</span></div>
<div class="gh" style="left:118px;top:0;width:87px;height:22px;border-top:none"><span>Exchange</span></div>
<div class="gh" style="left:205px;top:0;width:17px;height:22px;border-top:none;border-right:none"></div>
<div class="gi" style="left:0;top:22px;width:14px;height:21px"></div>
<div class="gc" style="left:14px;top:22px;width:72px;height:21px"><span style="left:4px;transform:scaleX(.925)">01-Nov-2020</span></div>
<div class="gc" style="left:86px;top:22px;width:32px;height:21px;background:#7b96dc;color:#fff;"><span style="left:4px">NTD</span></div>
<div class="gc" style="left:118px;top:22px;width:87px;height:21px;background:#7b96dc;color:#fff;"><span class="r" style="right:4px">512.00</span></div>
<div class="gi" style="left:0;top:43px;width:14px;height:21px"></div>
<div class="gc" style="left:14px;top:43px;width:72px;height:21px"><span style="left:4px;transform:scaleX(.925)">01-Jul-2019</span></div>
<div class="gc" style="left:86px;top:43px;width:32px;height:21px;"><span style="left:4px">RM</span></div>
<div class="gc" style="left:118px;top:43px;width:87px;height:21px;"><span class="r" style="right:4px">3,450.00</span></div>
<div class="gi" style="left:0;top:64px;width:14px;height:21px"></div>
<svg class="abs" style="left:4px;top:28px" width="6" height="9" viewBox="0 0 6 9"><path d="M1 1L4.500 4.500L1 8" fill="none" stroke="#3e5f99" stroke-width="2"/></svg>
<div class="sbv" style="left:204px;top:22px;width:17px;height:44px;border-top:1px solid #406db5;border-bottom:1px solid #406db5"></div>
<svg class="abs" style="left:208px;top:28px" width="9" height="5" viewBox="0 0 9 5"><path d="M0 5L4.500 0L9 5z" fill="#d7e3f5"/></svg>
<svg class="abs" style="left:208px;top:56px" width="9" height="5" viewBox="0 0 9 5"><path d="M0 0L4.500 5L9 0z" fill="#d7e3f5"/></svg>
</div>
<div class="abs" style="left:265px;top:195px;width:849px;height:515px;background:#deeafa"></div>
<div class="abs" style="left:1109px;top:220px;width:2px;height:484px;background:linear-gradient(90deg,#8db0e2,#b5cef0)"></div>
<div class="abs" style="left:265px;top:196px;width:62px;height:24px;border:1px solid #8db0e6;border-bottom:none;border-radius:4px 4px 0 0;background:linear-gradient(#fbfdff,#e9f1fc);box-shadow:inset 1px 1px 0 #fff"></div>
<div class="t" style="left:274.3px;top:202px;font-size:12px;font-weight:normal;transform:scaleX(0.9037);transform-origin:0 0;color:#15428b">Currency</div>
<div class="abs" style="left:262px;top:220px;width:849px;height:2px;background:linear-gradient(#8db0e6,#a9c6ec)"></div>
<div class="abs" style="left:265px;top:198px;width:60px;height:22px"></div>
<div class="grid" style="left:265px;top:221px;width:844px;height:292px;border-left:1px solid #8db0e6;border-top:1px solid #a5c3ec">
<div class="gh" style="left:-1px;top:0;width:15px;height:23px;border-top:none"><span style="top:4px"></span></div>
<div class="gh" style="left:14px;top:0;width:134px;height:23px;border-top:none"><span style="top:4px">Date</span></div>
<div class="gh" style="left:148px;top:0;width:74px;height:23px;border-top:none"><span style="top:4px">Exchange</span></div>
<div class="gh" style="left:222px;top:0;width:136px;height:23px;border-top:none"><span style="top:4px">Opening</span></div>
<div class="gh" style="left:358px;top:0;width:146px;height:23px;border-top:none"><span style="top:4px">Debit</span></div>
<div class="gh" style="left:504px;top:0;width:133px;height:23px;border-top:none"><span style="top:4px">Credit</span></div>
<div class="gh" style="left:637px;top:0;width:123px;height:23px;border-top:none"><span style="top:4px">Ending</span></div>
<div class="gh" style="left:760px;top:0;width:65px;height:23px;border-top:none"><span style="top:4px">Closed?</span></div>
<div class="gh" style="left:825px;top:0;width:17px;height:23px;border-top:none;border-right:1px solid #7fa3d8"></div>
<div class="gi" style="left:0;top:23px;width:14px;height:21px"></div>
<div class="gc" style="left:14px;top:23px;width:134px;height:21px"><span class="lnk" style="left:4px;transform:scaleX(.935)">01-Nov</span></div>
<div class="gc" style="left:148px;top:23px;width:74px;height:21px"><span class="r" style="right:3px">1.00</span></div>
<div class="gc" style="left:222px;top:23px;width:136px;height:21px"><span class="r" style="right:3px">32,573,829.48</span></div>
<div class="gc" style="left:358px;top:23px;width:146px;height:21px"><span class="r" style="right:3px">0.00</span></div>
<div class="gc" style="left:504px;top:23px;width:133px;height:21px"><span class="r" style="right:3px">0.00</span></div>
<div class="gc" style="left:637px;top:23px;width:123px;height:21px"><span class="r" style="right:3px">32,573,829.48</span></div>
<div class="gc" style="left:760px;top:23px;width:65px;height:21px"><div class="chk" style="left:27px;top:4px"></div></div>
<div class="gi" style="left:0;top:44px;width:14px;height:21px"></div>
<div class="gc" style="left:14px;top:44px;width:134px;height:21px"><span class="lnk" style="left:4px;transform:scaleX(.935)">02-Nov</span></div>
<div class="gc" style="left:148px;top:44px;width:74px;height:21px"><span class="r" style="right:3px">1.00</span></div>
<div class="gc" style="left:222px;top:44px;width:136px;height:21px"><span class="r" style="right:3px">32,573,829.48</span></div>
<div class="gc" style="left:358px;top:44px;width:146px;height:21px"><span class="r" style="right:3px">209,000.00</span></div>
<div class="gc" style="left:504px;top:44px;width:133px;height:21px"><span class="r" style="right:3px">617,000.00</span></div>
<div class="gc" style="left:637px;top:44px;width:123px;height:21px"><span class="r" style="right:3px">32,165,829.48</span></div>
<div class="gc" style="left:760px;top:44px;width:65px;height:21px"><div class="chk" style="left:27px;top:4px"></div></div>
<div class="gi" style="left:0;top:65px;width:14px;height:21px"></div>
<div class="gc" style="left:14px;top:65px;width:134px;height:21px"><span class="lnk" style="left:4px;transform:scaleX(.935)">03-Nov</span></div>
<div class="gc" style="left:148px;top:65px;width:74px;height:21px"><span class="r" style="right:3px">1.00</span></div>
<div class="gc" style="left:222px;top:65px;width:136px;height:21px"><span class="r" style="right:3px">32,165,829.48</span></div>
<div class="gc" style="left:358px;top:65px;width:146px;height:21px"><span class="r" style="right:3px">0.00</span></div>
<div class="gc" style="left:504px;top:65px;width:133px;height:21px"><span class="r" style="right:3px">34,170,839.05</span></div>
<div class="gc" style="left:637px;top:65px;width:123px;height:21px"><span class="r" style="right:3px">-2,005,009.57</span></div>
<div class="gc" style="left:760px;top:65px;width:65px;height:21px"><div class="chk" style="left:27px;top:4px"></div></div>
<div class="gi" style="left:0;top:86px;width:14px;height:21px"></div>
<div class="gc" style="left:14px;top:86px;width:134px;height:21px"><span class="lnk" style="left:4px;transform:scaleX(.935)">04-Nov</span></div>
<div class="gc" style="left:148px;top:86px;width:74px;height:21px"><span class="r" style="right:3px">1.00</span></div>
<div class="gc" style="left:222px;top:86px;width:136px;height:21px"><span class="r" style="right:3px">-2,005,009.57</span></div>
<div class="gc" style="left:358px;top:86px;width:146px;height:21px"><span class="r" style="right:3px">0.00</span></div>
<div class="gc" style="left:504px;top:86px;width:133px;height:21px"><span class="r" style="right:3px">12,070,000.00</span></div>
<div class="gc" style="left:637px;top:86px;width:123px;height:21px"><span class="r" style="right:3px">-14,075,009.57</span></div>
<div class="gc" style="left:760px;top:86px;width:65px;height:21px"><div class="chk" style="left:27px;top:4px"></div></div>
<div class="gi" style="left:0;top:107px;width:14px;height:21px"></div>
<div class="gc" style="left:14px;top:107px;width:134px;height:21px"><span class="lnk" style="left:4px;transform:scaleX(.935)">05-Nov</span></div>
<div class="gc" style="left:148px;top:107px;width:74px;height:21px"><span class="r" style="right:3px">1.00</span></div>
<div class="gc" style="left:222px;top:107px;width:136px;height:21px"><span class="r" style="right:3px">-14,075,009.57</span></div>
<div class="gc" style="left:358px;top:107px;width:146px;height:21px"><span class="r" style="right:3px">0.00</span></div>
<div class="gc" style="left:504px;top:107px;width:133px;height:21px"><span class="r" style="right:3px">0.00</span></div>
<div class="gc" style="left:637px;top:107px;width:123px;height:21px"><span class="r" style="right:3px">-14,075,009.57</span></div>
<div class="gc" style="left:760px;top:107px;width:65px;height:21px"><div class="chk" style="left:27px;top:4px"></div></div>
<div class="gi" style="left:0;top:128px;width:14px;height:21px"></div>
<div class="gc" style="left:14px;top:128px;width:134px;height:21px"><span class="lnk" style="left:4px;transform:scaleX(.935)">06-Nov</span></div>
<div class="gc" style="left:148px;top:128px;width:74px;height:21px"><span class="r" style="right:3px">1.00</span></div>
<div class="gc" style="left:222px;top:128px;width:136px;height:21px"><span class="r" style="right:3px">-14,075,009.57</span></div>
<div class="gc" style="left:358px;top:128px;width:146px;height:21px"><span class="r" style="right:3px">110,057,000.00</span></div>
<div class="gc" style="left:504px;top:128px;width:133px;height:21px"><span class="r" style="right:3px">129,111,317.00</span></div>
<div class="gc" style="left:637px;top:128px;width:123px;height:21px"><span class="r" style="right:3px">-33,129,326.57</span></div>
<div class="gc" style="left:760px;top:128px;width:65px;height:21px"><div class="chk" style="left:27px;top:4px"></div></div>
<div class="gi" style="left:0;top:149px;width:14px;height:21px"></div>
<div class="gc" style="left:14px;top:149px;width:134px;height:21px"><span class="lnk" style="left:4px;transform:scaleX(.935)">07-Nov</span></div>
<div class="gc" style="left:148px;top:149px;width:74px;height:21px"><span class="r" style="right:3px">1.00</span></div>
<div class="gc" style="left:222px;top:149px;width:136px;height:21px"><span class="r" style="right:3px">-33,129,326.57</span></div>
<div class="gc" style="left:358px;top:149px;width:146px;height:21px"><span class="r" style="right:3px">0.00</span></div>
<div class="gc" style="left:504px;top:149px;width:133px;height:21px"><span class="r" style="right:3px">0.00</span></div>
<div class="gc" style="left:637px;top:149px;width:123px;height:21px"><span class="r" style="right:3px">-33,129,326.57</span></div>
<div class="gc" style="left:760px;top:149px;width:65px;height:21px"><div class="chk" style="left:27px;top:4px"></div></div>
<div class="gi" style="left:0;top:170px;width:14px;height:21px"></div>
<div class="gc" style="left:14px;top:170px;width:134px;height:21px"><span class="lnk" style="left:4px;transform:scaleX(.935)">08-Nov</span></div>
<div class="gc" style="left:148px;top:170px;width:74px;height:21px"><span class="r" style="right:3px">1.00</span></div>
<div class="gc" style="left:222px;top:170px;width:136px;height:21px"><span class="r" style="right:3px">-33,129,326.57</span></div>
<div class="gc" style="left:358px;top:170px;width:146px;height:21px"><span class="r" style="right:3px">0.00</span></div>
<div class="gc" style="left:504px;top:170px;width:133px;height:21px"><span class="r" style="right:3px">0.00</span></div>
<div class="gc" style="left:637px;top:170px;width:123px;height:21px"><span class="r" style="right:3px">-33,129,326.57</span></div>
<div class="gc" style="left:760px;top:170px;width:65px;height:21px"><div class="chk" style="left:27px;top:4px"></div></div>
<div class="gi" style="left:0;top:191px;width:14px;height:21px"></div>
<div class="gc" style="left:14px;top:191px;width:134px;height:21px"><span class="lnk" style="left:4px;transform:scaleX(.935)">09-Nov</span></div>
<div class="gc" style="left:148px;top:191px;width:74px;height:21px"><span class="r" style="right:3px">1.00</span></div>
<div class="gc" style="left:222px;top:191px;width:136px;height:21px"><span class="r" style="right:3px">-33,129,326.57</span></div>
<div class="gc" style="left:358px;top:191px;width:146px;height:21px"><span class="r" style="right:3px">110,000,000.00</span></div>
<div class="gc" style="left:504px;top:191px;width:133px;height:21px"><span class="r" style="right:3px">49,298,200.00</span></div>
<div class="gc" style="left:637px;top:191px;width:123px;height:21px"><span class="r" style="right:3px">27,572,473.43</span></div>
<div class="gc" style="left:760px;top:191px;width:65px;height:21px"><div class="chk" style="left:27px;top:4px"></div></div>
<div class="gi" style="left:0;top:212px;width:14px;height:21px"></div>
<div class="gc" style="left:14px;top:212px;width:134px;height:21px"><span class="lnk" style="left:4px;transform:scaleX(.935)">10-Nov</span></div>
<div class="gc" style="left:148px;top:212px;width:74px;height:21px"><span class="r" style="right:3px">1.00</span></div>
<div class="gc" style="left:222px;top:212px;width:136px;height:21px"><span class="r" style="right:3px">27,572,473.43</span></div>
<div class="gc" style="left:358px;top:212px;width:146px;height:21px"><span class="r" style="right:3px">0.00</span></div>
<div class="gc" style="left:504px;top:212px;width:133px;height:21px"><span class="r" style="right:3px">16,632,850.00</span></div>
<div class="gc" style="left:637px;top:212px;width:123px;height:21px"><span class="r" style="right:3px">10,939,623.43</span></div>
<div class="gc" style="left:760px;top:212px;width:65px;height:21px"><div class="chk" style="left:27px;top:4px"></div></div>
<div class="gi" style="left:0;top:233px;width:14px;height:21px"></div>
<div class="gc" style="left:14px;top:233px;width:134px;height:21px"><span class="lnk" style="left:4px;transform:scaleX(.935)">11-Nov</span></div>
<div class="gc" style="left:148px;top:233px;width:74px;height:21px"><span class="r" style="right:3px">1.00</span></div>
<div class="gc" style="left:222px;top:233px;width:136px;height:21px"><span class="r" style="right:3px">10,939,623.43</span></div>
<div class="gc" style="left:358px;top:233px;width:146px;height:21px"><span class="r" style="right:3px">0.00</span></div>
<div class="gc" style="left:504px;top:233px;width:133px;height:21px"><span class="r" style="right:3px">270,000.00</span></div>
<div class="gc" style="left:637px;top:233px;width:123px;height:21px"><span class="r" style="right:3px">10,669,623.43</span></div>
<div class="gc" style="left:760px;top:233px;width:65px;height:21px"><div class="chk" style="left:27px;top:4px"></div></div>
<div class="gi" style="left:0;top:254px;width:14px;height:21px"></div>
<div class="gc" style="left:14px;top:254px;width:134px;height:21px"><span class="lnk" style="left:4px;transform:scaleX(.935)">12-Nov</span></div>
<div class="gc" style="left:148px;top:254px;width:74px;height:21px"><span class="r" style="right:3px">1.00</span></div>
<div class="gc" style="left:222px;top:254px;width:136px;height:21px"><span class="r" style="right:3px">10,669,623.43</span></div>
<div class="gc" style="left:358px;top:254px;width:146px;height:21px"><span class="r" style="right:3px">0.00</span></div>
<div class="gc" style="left:504px;top:254px;width:133px;height:21px"><span class="r" style="right:3px">0.00</span></div>
<div class="gc" style="left:637px;top:254px;width:123px;height:21px"><span class="r" style="right:3px">10,669,623.43</span></div>
<div class="gc" style="left:760px;top:254px;width:65px;height:21px"><div class="chk" style="left:27px;top:4px"></div></div>
<div class="gi" style="left:0;top:275px;width:14px;height:21px"></div>
<div class="gc" style="left:14px;top:275px;width:134px;height:21px"><span class="lnk" style="left:4px;transform:scaleX(.935)">13-Nov</span></div>
<div class="gc" style="left:148px;top:275px;width:74px;height:21px"><span class="r" style="right:3px">1.00</span></div>
<div class="gc" style="left:222px;top:275px;width:136px;height:21px"><span class="r" style="right:3px">10,669,623.43</span></div>
<div class="gc" style="left:358px;top:275px;width:146px;height:21px"><span class="r" style="right:3px">0.00</span></div>
<div class="gc" style="left:504px;top:275px;width:133px;height:21px"><span class="r" style="right:3px">24,074,669.00</span></div>
<div class="gc" style="left:637px;top:275px;width:123px;height:21px"><span class="r" style="right:3px">-13,405,045.57</span></div>
<div class="gc" style="left:760px;top:275px;width:65px;height:21px"><div class="chk" style="left:27px;top:4px"></div></div>
<svg class="abs" style="left:4px;top:29px" width="6" height="9" viewBox="0 0 6 9"><path d="M1 1L4.500 4.500L1 8" fill="none" stroke="#3e5f99" stroke-width="2"/></svg>
<div class="sbv" style="left:825px;top:23px;width:17px;height:269px"></div>
<div class="thumbv" style="left:826px;top:135px;width:15px;height:73px"></div>
<svg class="abs" style="left:830px;top:168px" width="8" height="7" viewBox="0 0 8 7"><path d="M0 .5h8M0 2.500h8M0 4.500h8M0 6.500h8" stroke="#446db0" stroke-width="1"/></svg>
<svg class="abs" style="left:829px;top:28px" width="9" height="5" viewBox="0 0 9 5"><path d="M0 5L4.500 0L9 5z" fill="#d7e3f5"/></svg>
<svg class="abs" style="left:829px;top:279px" width="9" height="5" viewBox="0 0 9 5"><path d="M0 0L4.500 5L9 0z" fill="#d7e3f5"/></svg>
</div>
<div class="abs" style="left:265px;top:513px;width:845px;height:9px;background:linear-gradient(#b5cdee 0,#b5cdee 1px,#eef4fc 1px,#eef4fc 2px,#6f9cd9 2px,#6f9cd9 6px,#8db1e3 6px,#8db1e3 6.500px,#e3edfb 6.500px,#e3edfb 8px,#9dbce6 8px)"></div>
<svg class="abs" style="left:679px;top:516px" width="14" height="2" viewBox="0 0 14 2"><g fill="#fff"><rect x="0" y="0" width="2" height="2"/><rect x="4" y="0" width="2" height="2"/><rect x="8" y="0" width="2" height="2"/><rect x="12" y="0" width="2" height="2"/></g></svg>
<div class="grid" style="left:265px;top:521px;width:844px;height:182px;border-left:1px solid #9fbce4;border-top:1px solid #9fbce4;border-bottom:1px solid #9fbce4">
<div class="gh" style="left:-1px;top:0;width:15px;height:23px;border-top:none"><span style="top:3px"></span></div>
<div class="gh" style="left:14px;top:0;width:93px;height:23px;border-top:none"><span style="top:3px">Trans No.</span></div>
<div class="gh" style="left:107px;top:0;width:147px;height:23px;border-top:none"><span style="top:3px">Description</span></div>
<div class="gh" style="left:254px;top:0;width:39px;height:23px;border-top:none"><span style="top:3px">COA</span></div>
<div class="gh" style="left:293px;top:0;width:132px;height:23px;border-top:none"><span style="top:3px">COA Description</span></div>
<div class="gh" style="left:425px;top:0;width:29px;height:23px;border-top:none"><span style="top:3px">Cry</span></div>
<div class="gh" style="left:454px;top:0;width:56px;height:23px;border-top:none"><span style="top:3px">Exchange</span></div>
<div class="gh" style="left:510px;top:0;width:67px;height:23px;border-top:none"><span style="top:3px">Debit</span></div>
<div class="gh" style="left:577px;top:0;width:69px;height:23px;border-top:none"><span style="top:3px">Credit</span></div>
<div class="gh" style="left:646px;top:0;width:65px;height:23px;border-top:none"><span style="top:3px">Base Debit</span></div>
<div class="gh" style="left:711px;top:0;width:66px;height:23px;border-top:none"><span style="top:3px">Base Credit</span></div>
<div class="gh" style="left:777px;top:0;width:66px;height:23px;border-top:none"><span style="top:3px">Status</span></div>
<div class="gi" style="left:0;top:23px;width:14px;height:21px;border-bottom-color:#9fbce4"></div>
<div class="gc" style="left:14px;top:23px;width:93px;height:21px;border-bottom:1px solid #9fbce4"></div>
<div class="gc" style="left:107px;top:23px;width:147px;height:21px;border-bottom:1px solid #9fbce4"></div>
<div class="gc" style="left:254px;top:23px;width:39px;height:21px;border-bottom:1px solid #9fbce4"></div>
<div class="gc" style="left:293px;top:23px;width:132px;height:21px;border-bottom:1px solid #9fbce4"></div>
<div class="gc" style="left:425px;top:23px;width:29px;height:21px;border-bottom:1px solid #9fbce4"></div>
<div class="gc" style="left:454px;top:23px;width:56px;height:21px;border-bottom:1px solid #9fbce4"></div>
<div class="gc" style="left:510px;top:23px;width:67px;height:21px;border-bottom:1px solid #9fbce4"></div>
<div class="gc" style="left:577px;top:23px;width:69px;height:21px;border-bottom:1px solid #9fbce4"></div>
<div class="gc" style="left:646px;top:23px;width:65px;height:21px;border-bottom:1px solid #9fbce4"></div>
<div class="gc" style="left:711px;top:23px;width:66px;height:21px;border-bottom:1px solid #9fbce4"></div>
<div class="gc" style="left:777px;top:23px;width:66px;height:21px;border-bottom:1px solid #9fbce4"></div>
<svg class="abs" style="left:2.500px;top:27.500px" width="8" height="10" viewBox="0 0 8 10"><path d="M.5 1.300Q.5 .5 1.500 .5H6.500Q7.500 .5 7.500 1.300V2.400L5.200 5V8.700H2.800V5L.5 2.400z" fill="#f1f6fd" stroke="#2f5ca8" stroke-width="1"/><path d="M.8 2.400H7.200" stroke="#2f5ca8" stroke-width=".9"/></svg>
<div class="abs" style="left:0;top:44px;width:844px;height:3px;background:#eef4fd"></div><div class="abs" style="left:0;top:47px;width:844px;height:1px;background:#9dbce6"></div>
<div class="abs" style="left:0;top:151px;width:844px;height:30px;background:linear-gradient(#edf3fc,#dfeafa);border-top:1px solid #9fbce4"></div>
<div class="abs" style="left:511px;top:153px;width:65px;height:26px;background:linear-gradient(#fff,#f4f8fd);border:1px solid #a9c3e6"></div>
<div class="abs" style="left:578px;top:153px;width:67px;height:26px;background:linear-gradient(#fff,#f4f8fd);border:1px solid #a9c3e6"></div>
</div>
<div class="abs" style="left:263px;top:703px;width:851px;height:7px;background:linear-gradient(#eaf1fc 0,#eaf1fc 1px,#8db0e2 1px,#a9c4ec 4px,#cfe0f6 5px,#d6e4f8 7px)"></div>

</div>
</body></html>
